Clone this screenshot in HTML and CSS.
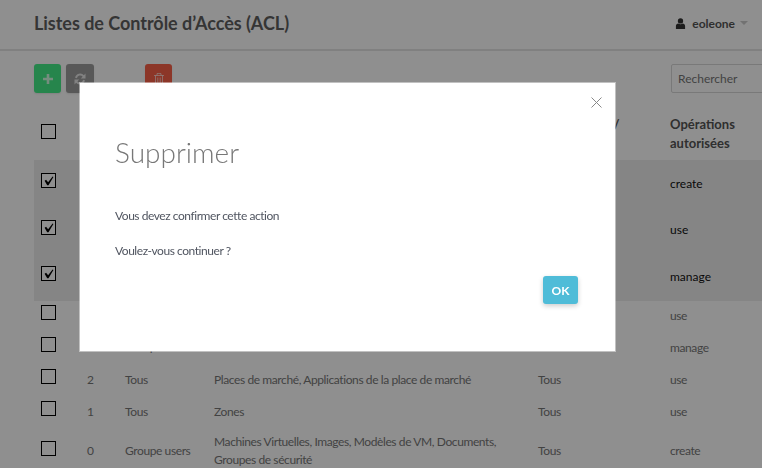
FILE: index.html
```html
<!DOCTYPE html>
<html lang="fr">
<head>
<meta charset="utf-8">
<title>Listes de Contrôle d'Accès (ACL)</title>
<link rel="stylesheet" href="styles.css">
</head>
<body>
<div class="page">
  <header class="topbar">
    <h1 class="title">Listes de Contrôle d’Accès (ACL)</h1>
    <div class="user">
      <svg class="user-icon" viewBox="0 0 12 12"><circle cx="6" cy="3.2" r="2.9"/><path d="M1 12V8.6C1 7 2.2 6 3.6 5.9 4.3 6.5 5.1 6.8 6 6.8s1.700-.3 2.400-.9C9.800 6 11 7 11 8.600V12z"/></svg>
      <span class="user-name">eoleone</span>
      <span class="caret"></span>
    </div>
  </header>
  <div class="toolbar">
    <button class="btn btn-green"><svg viewBox="0 0 10 10"><path d="M3.700 0h2.600v3.700H10v2.600H6.300V10H3.700V6.300H0V3.700h3.700z"/></svg></button>
    <button class="btn btn-gray"><svg viewBox="0 0 12 12"><path d="M2 5A4.200 4.200 0 0 1 9.400 3.100M10 7A4.200 4.200 0 0 1 2.600 8.900" class="arc"/><path d="M11.500 .6V5.400H6.800zM.5 11.400V6.600H5.200z"/></svg></button>
    <button class="btn btn-red"><svg viewBox="0 0 10 12"><path d="M0 2.500H10M3 2.500V.6H7V2.500M1.500 2.500V11.400H8.500V2.500M3.800 4.500V9.800M6.200 4.500V9.800" class="trash"/></svg></button>
    <input class="search" type="text" placeholder="Rechercher">
  </div>
  <table class="acl">
    <colgroup>
      <col class="c-check"><col class="c-id"><col class="c-user"><col class="c-res"><col class="c-zone"><col class="c-ops">
    </colgroup>
    <thead>
      <tr>
        <th class="check"><span class="box"></span></th>
        <th>ID</th><th>Utilisateur</th><th>Ressources</th><th>Zone ciblées /<br>Zone</th><th>Opérations<br>autorisées</th>
      </tr>
    </thead>
    <tbody>
      <tr class="sel s1"><td class="check"><span class="box"><svg viewBox="0 0 14 14"><path d="M2.800 7.300l1.600-1 2.200 2.700 4.800-6.300.9.600-5.300 8.700H5.600z"/></svg></span></td><td>5</td><td>Tous</td><td>Documents</td><td>Tous</td><td>create</td></tr>
      <tr class="sel s2"><td class="check"><span class="box"><svg viewBox="0 0 14 14"><path d="M2.800 7.300l1.600-1 2.200 2.700 4.800-6.300.9.600-5.300 8.700H5.600z"/></svg></span></td><td>4</td><td>Tous</td><td>Images</td><td>Tous</td><td>use</td></tr>
      <tr class="sel s3"><td class="check"><span class="box"><svg viewBox="0 0 14 14"><path d="M2.800 7.300l1.600-1 2.200 2.700 4.800-6.300.9.600-5.300 8.700H5.600z"/></svg></span></td><td>3</td><td>Tous</td><td>Réseaux</td><td>Tous</td><td>manage</td></tr>
      <tr class="row"><td class="check"><span class="box"></span></td><td>3</td><td>Tous</td><td>Modèles</td><td>Tous</td><td>use</td></tr>
      <tr class="row under"><td class="check"><span class="box"></span></td><td>3</td><td>Groupe users</td><td>Services</td><td>Tous</td><td>manage</td></tr>
      <tr class="row"><td class="check"><span class="box"></span></td><td>2</td><td>Tous</td><td>Places de marché, Applications de la place de marché</td><td>Tous</td><td>use</td></tr>
      <tr class="row"><td class="check"><span class="box"></span></td><td>1</td><td>Tous</td><td>Zones</td><td>Tous</td><td>use</td></tr>
      <tr class="row tall"><td class="check"><span class="box"></span></td><td>0</td><td>Groupe users</td><td>Machines Virtuelles, Images, Modèles de VM, Documents,<br>Groupes de sécurité</td><td>Tous</td><td>create</td></tr>
    </tbody>
  </table>
</div>
<div class="overlay"></div>
<section class="modal">
  <svg class="close" viewBox="0 0 11 11"><path d="M.5.500l10 10M10.500.500l-10 10"/></svg>
  <h2 class="modal-title">Supprimer</h2>
  <p class="modal-text">Vous devez confirmer cette action</p>
  <p class="modal-text">Voulez-vous continuer ?</p>
  <div class="modal-actions"><button class="ok">OK</button></div>
</section>
</body>
</html>
```
FILE: styles.css
```css
html, body { margin: 0; height: 100%; overflow: hidden; background: #fff; }
body { font: 12px/19px Lato, sans-serif; color: #777; }
.page { width: 800px; height: 468px; overflow: hidden; }

.topbar { display: flex; align-items: center; justify-content: space-between; width: 762px; height: 51px; box-sizing: border-box; border-bottom: 2px solid #e4e4e4; padding: 0 14px 3px 34px; }
.title { margin: 0; font-size: 18px; font-weight: 700; color: #5f5f5f; letter-spacing: -.03px; }
.user { display: flex; align-items: center; font-size: 12px; font-weight: 700; color: #555; }
.user-icon { width: 11px; height: 11px; fill: #333; margin-right: 6px; }
.caret { width: 0; height: 0; margin-left: 5px; border: 4px solid transparent; border-top-color: #ccc; border-bottom: 0; }

.toolbar { display: flex; align-items: flex-start; padding-top: 13px; padding-left: 34px; height: 40px; }
.btn { width: 27px; height: 29px; padding: 0; margin-right: 5px; border: 0; border-radius: 3px; display: flex; align-items: center; justify-content: center; box-shadow: 0 1px 2px rgba(0,0,0,.1); }
.btn svg { height: 10px; width: 10px; fill: rgba(255,255,255,.75); }
.btn-green { background: #44ee88; }
.btn-gray { width: 28px; background: #9e9e9e; }
.btn-gray svg { width: 12px; height: 12px; }
.btn-gray .arc { fill: none; stroke: rgba(255,255,255,.75); stroke-width: 1.800; }
.btn-red { margin-left: 46px; background: #fa6048; }
.btn-red svg { height: 12px; }
.btn-red .trash { fill: none; stroke: rgba(255,255,255,.62); stroke-width: 1; }
.search { margin-left: 494px; width: 120px; height: 29px; box-sizing: border-box; padding: 0 6px; border: 1px solid #d8d8d8; border-radius: 2px; background: #fff; font: 12px Lato, sans-serif; }
.search::placeholder { color: #777; opacity: 1; }

.acl { margin-left: 34px; width: 766px; table-layout: fixed; border-collapse: collapse; }
.c-check { width: 46px; } .c-id { width: 38px; } .c-user { width: 89px; } .c-res { width: 324px; } .c-zone { width: 132px; }
.acl th, .acl td { padding: 0 7px; text-align: left; vertical-align: middle; white-space: nowrap; }
.acl thead tr { height: 56px; }
.acl th { font-size: 13px; font-weight: 700; color: #555; line-height: 19px; padding-top: 3px; }
.acl tbody td { letter-spacing: -.4px; line-height: 18px; padding-bottom: 3px; }
.acl .under td:not(.check):not(:last-child) { padding-bottom: 5px; }
.sel { background: #eee; }
.acl .sel td { color: #111; letter-spacing: 0; padding-bottom: 1px; }
.acl .s1 td { padding-top: 1px; padding-bottom: 0; }
.acl .tall td { padding-bottom: 1px; }
.s1 { height: 47px; } .s2 { height: 46px; } .s3 { height: 48px; }
.row { height: 32px; }
.row.tall { height: 44px; }
.box { display: block; width: 13px; height: 13px; border: 1px solid #000; background: #fff; margin-top: -7px; }
.acl th .box { margin-top: -5px; }
.sel .box { margin-top: -6px; }
.s1 .box { margin-top: -7px; }
.s2 .box { margin-top: -4px; }
.row.tall .box { margin-top: -5px; }
.box svg { display: block; width: 13px; height: 13px; fill: #000; }

.overlay { position: fixed; inset: 0; background: rgba(0,0,0,.44); }
.modal { position: absolute; left: 80px; top: 83px; width: 535px; height: 268px; box-sizing: border-box; background: #fff; padding: 51px 37px 0 35px; color: #333; box-shadow: 0 0 0 1px rgba(255,255,255,.45); }
.close { position: absolute; right: 13px; top: 14px; width: 11px; height: 11px; fill: none; stroke: #888; stroke-width: 1; }
.modal-title { margin: 0 0 36px; font-size: 28px; line-height: 36px; font-weight: 300; color: #777; }
.modal-text { margin: 0 0 15px; font-size: 12px; line-height: 20px; letter-spacing: -.45px; color: #505560; }
.modal-actions { display: flex; justify-content: flex-end; margin-top: 5px; }
.ok { width: 35px; height: 28px; padding: 0; border: 0; border-radius: 3px; background: #4fbcd8; color: #fff; font: 700 12px Lato, sans-serif; box-shadow: 0 2px 5px rgba(0,0,0,.2); }
```
